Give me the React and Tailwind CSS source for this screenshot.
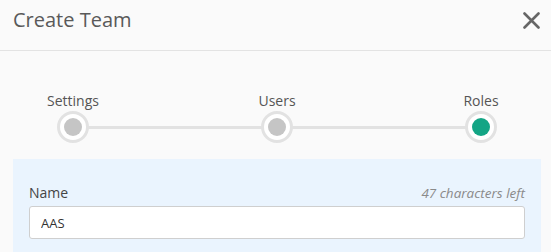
import React from 'react';

const steps = [
  { label: 'Settings', active: false },
  { label: 'Users', active: false },
  { label: 'Roles', active: true },
];

function App() {
  return (
    <div
      className="w-[551px] h-[252px] overflow-hidden bg-[#fafafa]"
      style={{ fontFamily: '"Open Sans", "Liberation Sans", sans-serif' }}
    >
      {/* Header */}
      <div className="h-[51px] border-b border-[#e3e3e3] flex items-start justify-between pl-[13px] pr-[11px]">
        <h2 className="pt-[6px] text-[20px] leading-[28px] text-[#595959]">Create Team</h2>
        <button className="mt-[12px] w-[17px] h-[17px] text-[#666]">
          <svg width="17" height="17" viewBox="0 0 17 17" fill="none" stroke="currentColor" strokeWidth="2.6" strokeLinecap="round">
            <path d="M1.5 1.5 L15.5 15.5 M15.5 1.5 L1.5 15.5" />
          </svg>
        </button>
      </div>

      {/* Stepper */}
      <div className="ml-[41px] w-[472px] pt-[40px]">
        <div className="flex justify-between">
          {steps.map((s) => (
            <div key={s.label} className="w-16 text-center text-[14px] leading-[20px] text-[#555]">
              {s.label}
            </div>
          ))}
        </div>
        <div className="relative flex justify-between">
          <div className="absolute left-8 right-8 top-[15px] h-[3px] bg-[#e2e2e2]" />
          {steps.map((s) => (
            <div key={s.label} className="relative w-16 flex justify-center">
              <div className="w-[32px] h-[32px] rounded-full bg-white border-[3px] border-[#e2e2e2] flex items-center justify-center">
                <div className={`w-[18px] h-[18px] rounded-full ${s.active ? 'bg-[#13a585]' : 'bg-[#c5c5c5]'}`} />
              </div>
            </div>
          ))}
        </div>
      </div>

      {/* Form panel */}
      <div className="ml-[13px] w-[528px] mt-[16px] bg-[#eaf4fe] px-[16px] pt-[24px] pb-[16px]">
        <div className="flex items-center justify-between mb-[3px]">
          <label className="text-[14px] leading-[20px] text-[#444]">Name</label>
          <span className="text-[13.5px] leading-[20px] italic text-[#8a8a8a]">47 characters left</span>
        </div>
        <input
          defaultValue="AAS"
          className="w-full h-[33px] bg-white border border-[#cfcfcf] rounded-[3px] px-[11px] text-[13px] text-[#333] outline-none"
        />
      </div>
    </div>
  );
}

export default App;
